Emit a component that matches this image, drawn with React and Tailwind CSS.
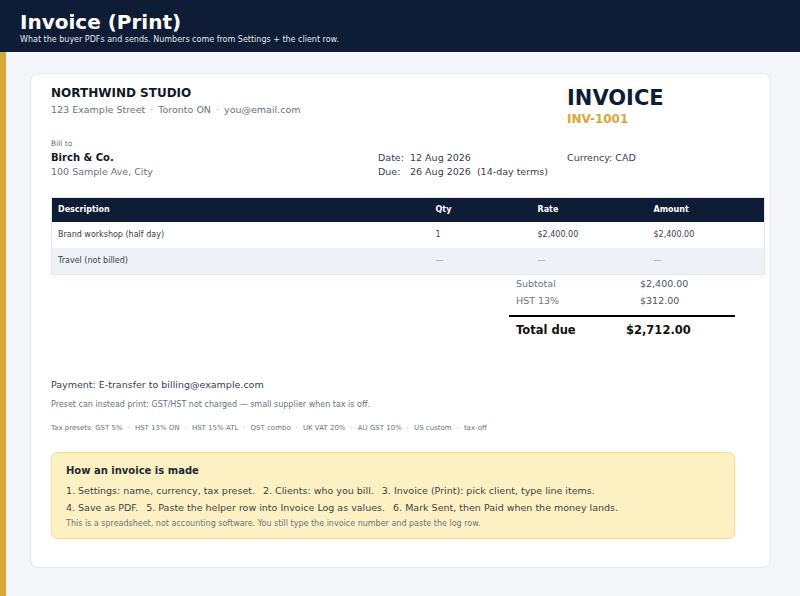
import React from 'react';

const lineItems = [
  { desc: 'Brand workshop (half day)', qty: '1', rate: '$2,400.00', amount: '$2,400.00' },
  { desc: 'Travel (not billed)', qty: '—', rate: '—', amount: '—', muted: true },
];

const taxPresets = ['GST 5%', 'HST 13% ON', 'HST 15% ATL', 'QST combo', 'UK VAT 20%', 'AU GST 10%', 'US custom', 'tax-off'];

function Dot() {
  return <span className="mx-[5px] text-gray-400">·</span>;
}

function App() {
  return (
    <div className="min-h-[596px] bg-[#f4f6f9] font-['DejaVu_Sans',sans-serif]">
      {/* top bar */}
      <header className="h-[52px] bg-[#0f1c36] px-[20px] pt-[9px]">
        <h1 className="text-[20px] leading-[26px] font-bold text-white">Invoice (Print)</h1>
        <p className="text-[8px] leading-[10px] text-gray-200">
          What the buyer PDFs and sends. Numbers come from Settings + the client row.
        </p>
      </header>

      <div className="border-l-[6px] border-[#d6a73b] pl-[24px] pt-[21px] pb-[29px]">
        <div className="w-[741px] rounded-[8px] border border-[#e3e7ec] bg-white pl-[20px] pt-[11px] pb-[28px]">
          {/* company + invoice title */}
          <div className="grid grid-cols-[516px_1fr]">
            <div>
              <div className="text-[12px] leading-[16px] font-bold text-[#111827]">NORTHWIND STUDIO</div>
              <div className="mt-[2px] text-[9.5px] leading-[14px] text-gray-500">
                123 Example Street<Dot />Toronto ON<Dot />you@email.com
              </div>
            </div>
            <div>
              <div className="text-[21px] leading-[26px] font-bold text-[#0f1c36]">INVOICE</div>
              <div className="text-[12px] leading-[16px] font-bold text-[#d6a73b]">INV-1001</div>
            </div>
          </div>

          {/* bill to / dates / currency */}
          <div className="mt-[11px] grid grid-cols-[327px_189px_1fr] text-[9.5px] leading-[14px] text-[#374151]">
            <div>
              <div className="text-[7.5px] leading-[12px] text-gray-500">Bill to</div>
              <div className="mt-[1px] text-[10px] font-bold text-[#111827]">Birch &amp; Co.</div>
              <div className="text-gray-500">100 Sample Ave, City</div>
            </div>
            <div className="mt-[13px]">
              <div><span className="inline-block w-[32px]">Date:</span>12 Aug 2026</div>
              <div><span className="inline-block w-[32px]">Due:</span>26 Aug 2026{'\u00a0'} (14-day terms)</div>
            </div>
            <div className="mt-[13px]">Currency: CAD</div>
          </div>

          {/* line items */}
          <table className="mt-[18px] w-[713px] table-fixed border-collapse border border-[#e3e7ec] text-[8px] text-[#374151]">
            <colgroup>
              <col className="w-[378px]" />
              <col className="w-[102px]" />
              <col className="w-[116px]" />
              <col className="w-[117px]" />
            </colgroup>
            <thead>
              <tr className="h-[24px] bg-[#0f1c36] text-left text-white">
                <th className="px-[6px] font-bold">Description</th>
                <th className="px-[6px] font-bold">Qty</th>
                <th className="px-[6px] font-bold">Rate</th>
                <th className="px-[6px] font-bold">Amount</th>
              </tr>
            </thead>
            <tbody>
              {lineItems.map((item) => (
                <tr key={item.desc} className={item.muted ? 'h-[27px] bg-[#eef2f6]' : 'h-[26px] bg-white'}>
                  <td className="px-[6px]">{item.desc}</td>
                  <td className={item.muted ? 'px-[6px] text-gray-400' : 'px-[6px]'}>{item.qty}</td>
                  <td className={item.muted ? 'px-[6px] text-gray-400' : 'px-[6px]'}>{item.rate}</td>
                  <td className={item.muted ? 'px-[6px] text-gray-400' : 'px-[6px]'}>{item.amount}</td>
                </tr>
              ))}
            </tbody>
          </table>

          {/* totals */}
          <div className="ml-[458px] w-[226px] text-[9.5px] leading-[17px]">
            <div className="grid grid-cols-[124px_1fr] pl-[7px]">
              <span className="text-gray-500">Subtotal</span>
              <span className="text-[#4b5563]">$2,400.00</span>
              <span className="text-gray-500">HST 13%</span>
              <span className="text-[#4b5563]">$312.00</span>
            </div>
            <div className="mt-[6px] grid grid-cols-[110px_1fr] border-t-2 border-black pt-[5px] pl-[7px] text-[11.5px] leading-[16px] font-bold text-[#111]">
              <span>Total due</span>
              <span>$2,712.00</span>
            </div>
          </div>

          {/* payment + notes */}
          <div className="mt-[40px] text-[9.5px] leading-[14px] text-[#374151]">Payment: E-transfer to billing@example.com</div>
          <div className="mt-[7px] text-[8px] leading-[12px] text-gray-500">
            Preset can instead print: GST/HST not charged — small supplier when tax is off.
          </div>
          <div className="mt-[12px] text-[7px] leading-[10px] text-gray-500">
            Tax presets: {taxPresets.map((p, i) => (
              <React.Fragment key={p}>
                {i > 0 && <Dot />}
                {p}
              </React.Fragment>
            ))}
          </div>

          {/* how-to box */}
          <div className="mt-[19px] w-[684px] rounded-[6px] border border-[#f3dc8e] bg-[#fdf1c4] px-[14px] pt-[11px] pb-[8px] text-[#3f3f46]">
            <div className="text-[10px] leading-[14px] font-bold text-[#1f2937]">How an invoice is made</div>
            <div className="mt-[6px] flex gap-x-[8px] text-[9.5px] leading-[14px]">
              <span>1. Settings: name, currency, tax preset.</span>
              <span>2. Clients: who you bill.</span>
              <span>3. Invoice (Print): pick client, type line items.</span>
            </div>
            <div className="mt-[3px] flex gap-x-[8px] text-[9.5px] leading-[14px]">
              <span>4. Save as PDF.</span>
              <span>5. Paste the helper row into Invoice Log as values.</span>
              <span>6. Mark Sent, then Paid when the money lands.</span>
            </div>
            <div className="mt-[3px] text-[8px] leading-[12px] text-gray-500">
              This is a spreadsheet, not accounting software. You still type the invoice number and paste the log row.
            </div>
          </div>
        </div>
      </div>
    </div>
  );
}

export default App;
